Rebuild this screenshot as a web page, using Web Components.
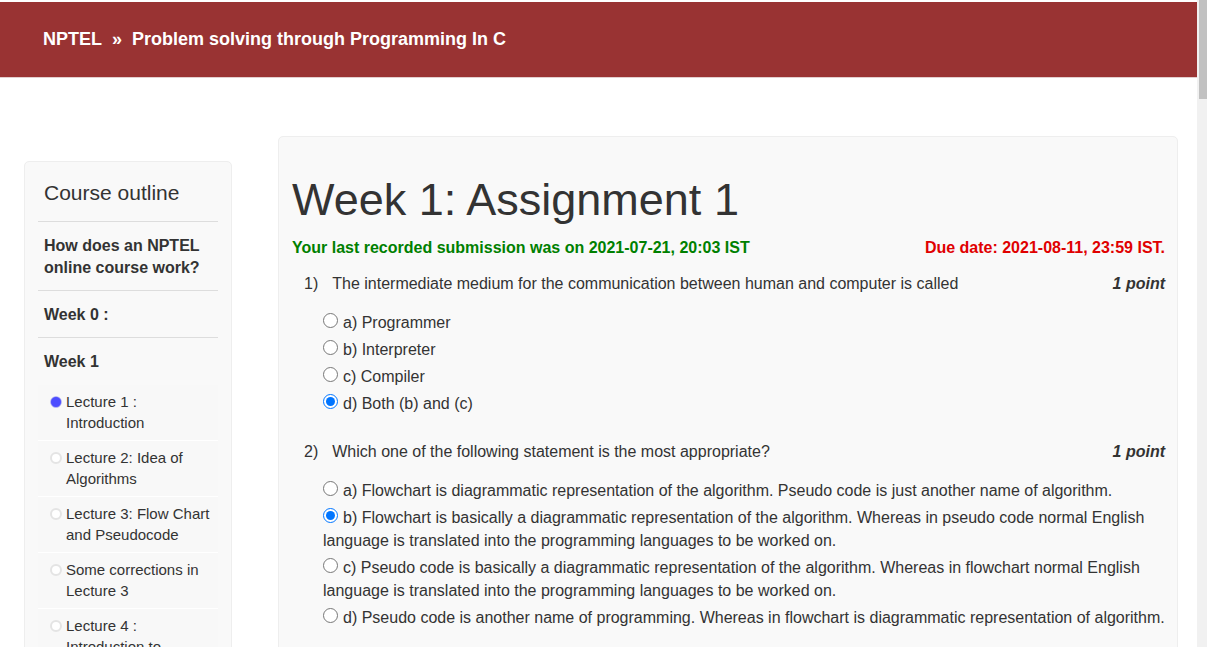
<!DOCTYPE html>
<html lang="en">
<head>
<meta charset="utf-8">
<meta name="viewport" content="width=device-width, initial-scale=1">
<title>Week 1: Assignment 1</title>
<style>
  body { margin: 0; font: 16px/23px "Liberation Sans", Arial, sans-serif; color: #333; background: #fff; }
  .lessons { padding-top: 1px; }
</style>
</head>
<body>
<page-frame>
  <course-header slot="header" site="NPTEL" course="Problem solving through Programming In C"></course-header>
  <course-outline slot="nav">
    <outline-unit>How does an NPTEL online course work?</outline-unit>
    <outline-unit>Week 0 :</outline-unit>
    <outline-unit>Week 1</outline-unit>
    <div class="lessons">
      <outline-lesson done>Lecture 1 : Introduction</outline-lesson>
      <outline-lesson>Lecture 2: Idea of Algorithms</outline-lesson>
      <outline-lesson>Lecture 3: Flow Chart and Pseudocode</outline-lesson>
      <outline-lesson>Some corrections in Lecture 3</outline-lesson>
      <outline-lesson>Lecture 4 : Introduction to</outline-lesson>
    </div>
  </course-outline>
  <assignment-card heading="Week 1: Assignment 1">
    <span slot="submitted">Your last recorded submission was on 2021-07-21, 20:03 IST</span>
    <span slot="due">Due date: 2021-08-11, 23:59 IST.</span>
    <quiz-question number="1" points="1 point" answer="3">
      <span slot="prompt">The intermediate medium for the communication between human and computer is called</span>
      <data>a) Programmer</data>
      <data>b) Interpreter</data>
      <data>c) Compiler</data>
      <data>d) Both (b) and (c)</data>
    </quiz-question>
    <quiz-question number="2" points="1 point" answer="1">
      <span slot="prompt">Which one of the following statement is the most appropriate?</span>
      <data>a) Flowchart is diagrammatic representation of the algorithm. Pseudo code is just another name of algorithm.</data>
      <data>b) Flowchart is basically a diagrammatic representation of the algorithm. Whereas in pseudo code normal English language is translated into the programming languages to be worked on.</data>
      <data>c) Pseudo code is basically a diagrammatic representation of the algorithm. Whereas in flowchart normal English language is translated into the programming languages to be worked on.</data>
      <data>d) Pseudo code is another name of programming. Whereas in flowchart is diagrammatic representation of algorithm.</data>
    </quiz-question>
  </assignment-card>
</page-frame>

<script>
  class Base extends HTMLElement {
    connectedCallback() {
      if (this.shadowRoot) return;
      this.attachShadow({ mode: "open" }).innerHTML = this.template();
      this.ready();
    }
    ready() {}
  }

  customElements.define("page-frame", class extends Base {
    template() {
      return `<style>
        :host { display: flex; height: 100vh; overflow: hidden; }
        .page { flex: 1; min-width: 0; padding-top: 2px; overflow: hidden; }
        .columns { display: flex; align-items: flex-start; gap: 46px; padding: 58px 19px 24px 24px; }
        .nav { flex: 0 0 208px; margin-top: 25px; }
        main { flex: 1; min-width: 0; }
        .track { flex: 0 0 10px; padding-left: 2px; box-sizing: border-box; background: #f1f1f1; }
        .thumb { height: 99px; background: #c1c1c1; }
      </style>
      <div class="page">
        <slot name="header"></slot>
        <div class="columns"><div class="nav"><slot name="nav"></slot></div><main><slot></slot></main></div>
      </div>
      <div class="track" aria-hidden="true"><div class="thumb"></div></div>`;
    }
  });

  customElements.define("course-header", class extends Base {
    template() {
      return `<style>
        :host { display: block; background: #993333; border-bottom: 1px solid #e3cfcf; }
        nav { display: flex; gap: 10px; padding: 25px 43px 26px; font-size: 18px; line-height: 24px; font-weight: bold; color: #fff; }
        a { color: inherit; text-decoration: none; }
      </style>
      <nav aria-label="Breadcrumb"><a href="#">${this.getAttribute("site")}</a><span>»</span><a href="#">${this.getAttribute("course")}</a></nav>`;
    }
  });

  customElements.define("course-outline", class extends Base {
    template() {
      return `<style>
        :host { display: block; padding: 0 13px; background: #f9f9f9; border: 1px solid #eee; border-radius: 5px; }
        h2 { margin: 0; padding: 19px 6px 16px; font-size: 21px; line-height: 24px; font-weight: normal; }
      </style>
      <h2>Course outline</h2>
      <nav aria-label="Course outline"><slot></slot></nav>`;
    }
  });

  customElements.define("outline-unit", class extends Base {
    template() {
      return `<style>
        :host { display: block; border-top: 1px solid #ddd; }
        a { display: block; padding: 13px 6px 11px; line-height: 22px; font-weight: bold; color: inherit; text-decoration: none; }
      </style>
      <a href="#"><slot></slot></a>`;
    }
  });

  customElements.define("outline-lesson", class extends Base {
    template() {
      const dot = this.hasAttribute("done")
        ? `<circle cx="6" cy="6" r="5.5" fill="#4d4dff" stroke="#c4c4ee" stroke-width=".6"/>`
        : `<circle cx="6" cy="6" r="5" fill="#fff" stroke="#e4e4e4" stroke-width="2"/>`;
      return `<style>
        :host { display: block; background: #f8f8f8; border-bottom: 1px solid #fff; }
        a { display: flex; gap: 4px; padding: 6px 4px 7px 12px; font-size: 15px; line-height: 21px; color: inherit; text-decoration: none; }
        svg { flex: none; margin-top: 5px; }
      </style>
      <a href="#"><svg width="12" height="12" viewBox="0 0 12 12" aria-hidden="true">${dot}</svg><span><slot></slot></span></a>`;
    }
  });

  customElements.define("assignment-card", class extends Base {
    template() {
      return `<style>
        :host { display: block; padding: 40px 4px 24px 13px; background: #f9f9f9; border: 1px solid #eee; border-radius: 5px; }
        h1 { margin: 0 0 13px; font-size: 45px; line-height: 46px; font-weight: normal; }
        .status { display: flex; justify-content: space-between; gap: 24px; margin-bottom: 13px; padding-right: 8px; font-weight: bold; }
        .ok { color: green; }
        .due { color: #e00000; }
        form { display: flex; flex-direction: column; gap: 25px; }
      </style>
      <h1>${this.getAttribute("heading")}</h1>
      <div class="status"><div class="ok"><slot name="submitted"></slot></div><div class="due"><slot name="due"></slot></div></div>
      <form><slot></slot></form>`;
    }
  });

  customElements.define("quiz-question", class extends Base {
    template() {
      return `<style>
        :host { display: block; padding-left: 12px; }
        .ask { display: flex; gap: 14px; margin-bottom: 12px; padding-right: 8px; }
        .prompt { flex: 1; }
        .points { font-weight: bold; font-style: italic; }
        .options { padding-left: 19px; }
        label { display: block; padding-top: 4px; }
        input { width: 15px; height: 15px; margin: 0 5px 1px 0; vertical-align: baseline; accent-color: #0075ff; }
      </style>
      <div class="ask"><span>${this.getAttribute("number")})</span><span class="prompt" id="prompt"><slot name="prompt"></slot></span><span class="points">${this.getAttribute("points")}</span></div>
      <div class="options" role="radiogroup" aria-labelledby="prompt"></div>`;
    }
    ready() {
      const box = this.shadowRoot.querySelector(".options");
      this.querySelectorAll("data").forEach((item, i) => {
        const label = document.createElement("label");
        const radio = document.createElement("input");
        radio.type = "radio";
        radio.name = "q" + this.getAttribute("number");
        radio.checked = i === Number(this.getAttribute("answer"));
        label.append(radio, item.textContent);
        box.append(label);
      });
    }
  });
</script>
</body>
</html>
